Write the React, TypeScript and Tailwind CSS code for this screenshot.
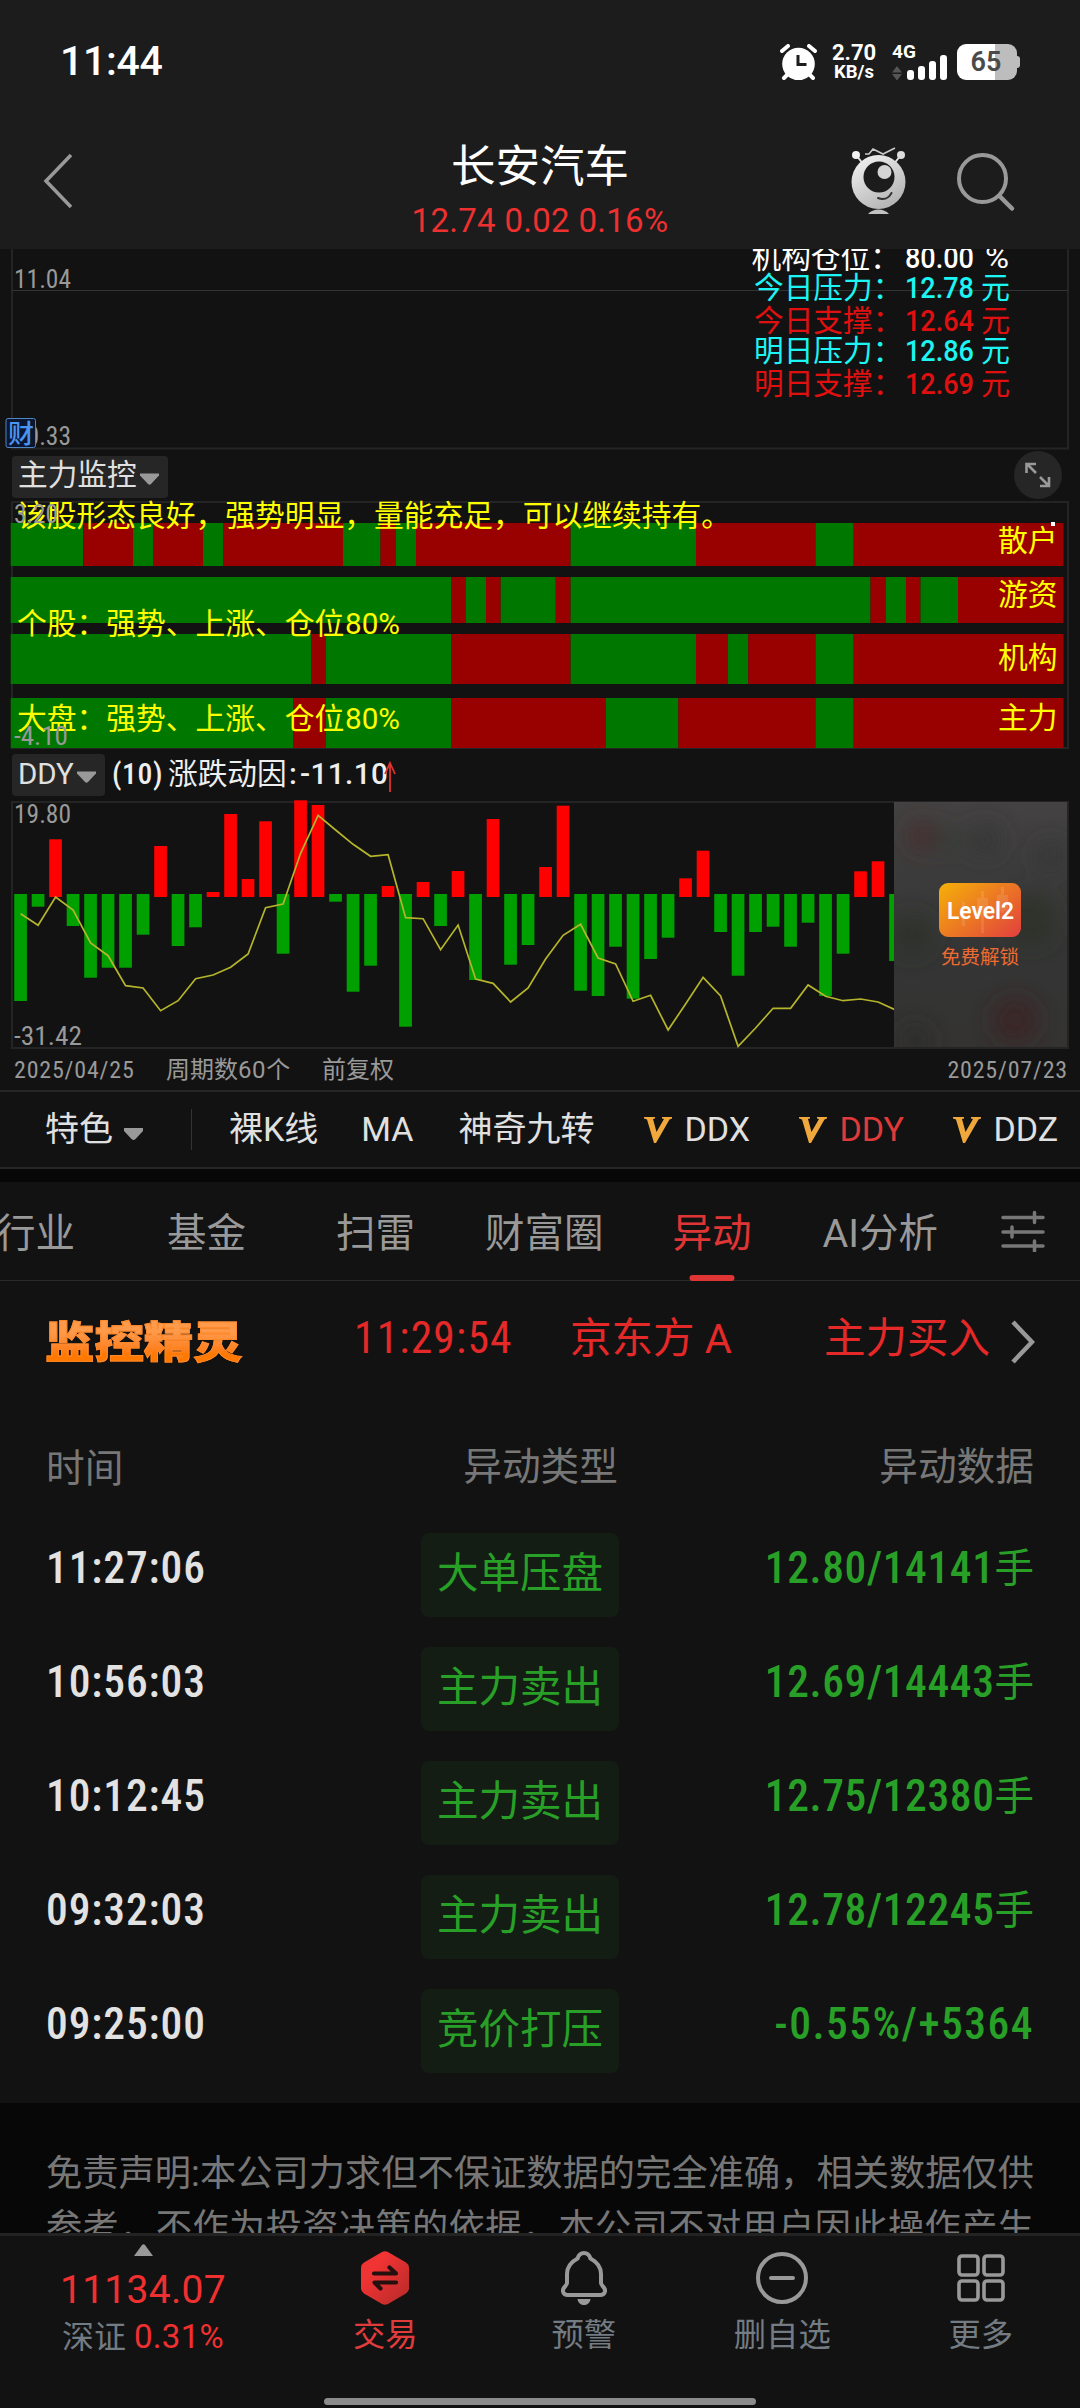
import React, { useState } from "react"

const GREEN = "#007800"
const RED = "#990000"

// each strip: [end x, color], the first one starts at STRIP_START
const STRIP_START = 10.7
const strips = [
	{
		label: "散户",
		y: 523,
		h: 43,
		labelY: 550.5,
		parts: [
			[83.3, "g"], [133, "r"], [153, "g"], [203, "r"], [223.5, "g"], [343, "r"], [380.5, "g"],
			[395.7, "r"], [416, "g"], [570.6, "r"], [696, "g"], [815.5, "r"], [853.7, "g"], [1063.5, "r"],
		],
	},
	{
		label: "游资",
		y: 577,
		h: 46,
		labelY: 604.5,
		parts: [
			[451, "g"], [465.6, "r"], [486, "g"], [500.7, "r"], [555.8, "g"], [570.6, "r"], [870.5, "g"],
			[885.7, "r"], [906, "g"], [920.5, "r"], [958, "g"], [1063.5, "r"],
		],
	},
	{
		label: "机构",
		y: 634,
		h: 50,
		labelY: 667.5,
		parts: [
			[311, "g"], [326, "r"], [451, "g"], [570.6, "r"], [696, "g"], [728, "r"], [748.3, "g"],
			[815.5, "r"], [853.7, "g"], [1063.5, "r"],
		],
	},
	{
		label: "主力",
		y: 698,
		h: 50,
		labelY: 727.5,
		parts: [
			[293, "g"], [326, "r"], [451, "g"], [606, "r"], [678.4, "g"], [815.5, "r"], [853.7, "g"], [1063.5, "r"],
		],
	},
]

// end of every DDY bar, above 894 is red
const ddyBars = [
	1001, 906.7, 839.3, 926, 977.7, 967.7, 967.7, 934.7, 846, 946, 927.3, 892, 814, 879, 821.3, 953.7, 800.3,
	805, 901.7, 991.7, 965.7, 886, 1026.7, 882, 926, 871, 980, 819, 964.7, 945, 867, 805.7, 990.7, 996, 946.7,
	998.7, 959, 937.7, 878.3, 850.7, 932, 975.7, 932, 926.7, 946.7, 922.7, 996, 953.7, 871.3, 861.3, 961,
]

const ddyLine = [
	913.7, 925.3, 897, 910, 943, 955.7, 985.7, 988, 1010.7, 1000.7, 978.7, 975, 967.3, 954, 907.7, 904, 853.3,
	815.3, 830, 844.3, 856.3, 854.7, 917.7, 918.7, 949.7, 925, 979, 983.3, 1002, 988, 959, 935.3, 924.3, 958,
	964, 1001.3, 995.3, 1030, 1004, 977.3, 996, 1046.3, 1028, 1008.3, 1008.3, 985, 996.3, 1000.7, 999, 1002, 1010,
]

const levels = [
	{ name: "机构仓位：", value: "80.00", unit: "%", y: 267.5, x: 751.5, color: "#ffffff" },
	{ name: "今日压力：", value: "12.78", unit: "元", y: 298, x: 754, color: "#1df4f4" },
	{ name: "今日支撑：", value: "12.64", unit: "元", y: 331, x: 754, color: "#e01010" },
	{ name: "明日压力：", value: "12.86", unit: "元", y: 361, x: 754, color: "#1df4f4" },
	{ name: "明日支撑：", value: "12.69", unit: "元", y: 394, x: 754, color: "#e01010" },
]

const tabs = [
	{ name: "行业", cls: "w-[75px] justify-end" },
	{ name: "基金", cls: "ml-[92px]" },
	{ name: "扫雷", cls: "ml-[90px]" },
	{ name: "财富圈", cls: "ml-[70px]" },
	{ name: "异动", cls: "ml-[69px]" },
	{ name: "AI分析", cls: "ml-[71px]" },
]

const records = [
	{ time: "11:27:06", type: "大单压盘", data: "12.80/14141", unit: "手" },
	{ time: "10:56:03", type: "主力卖出", data: "12.69/14443", unit: "手" },
	{ time: "10:12:45", type: "主力卖出", data: "12.75/12380", unit: "手" },
	{ time: "09:32:03", type: "主力卖出", data: "12.78/12245", unit: "手" },
	{ time: "09:25:00", type: "竞价打压", data: "-0.55%/+5364", unit: "" },
]

function StatusBar() {
	return (
		<div className="flex h-[120px] items-start justify-between pl-[60px] pr-[60px] text-white">
			<div className="mt-[36px] text-[41px] leading-[50px] font-medium tracking-[-0.3px]">11:44</div>
			<div className="mt-[44px] flex h-9">
				<svg width="37" height="36" viewBox="0 0 37 36" fill="none">
					<circle cx="18.5" cy="20" r="16.3" fill="#fff" />
					<path d="M2 7l6-5M35 7l-6-5M4 34l5-5M33 34l-5-5" stroke="#fff" strokeWidth="4" strokeLinecap="round" />
					<path d="M18 11v9.5h8.5" stroke="#1c1c1c" strokeWidth="3" />
				</svg>
				<div className="ml-[12px] flex w-[50px] flex-col items-center font-bold">
					<span className="text-[22px] leading-[18px]">2.70</span>
					<span className="text-[18.5px] leading-[21px]">KB/s</span>
				</div>
				<svg className="ml-[13px]" width="58" height="36" viewBox="0 0 58 36">
					<text x="0" y="14" fontSize="19" fontWeight="700" fill="#fff" textLength="24">
						4G
					</text>
					<path d="M5 22l5 6.500h-10zM5 36.500l5-6.500h-10z" fill="#555" />
					<rect x="15" y="26" width="7" height="10" rx="3" fill="#fff" />
					<rect x="26" y="22" width="7" height="14" rx="3" fill="#fff" />
					<rect x="37" y="17" width="7" height="19" rx="3" fill="#fff" />
					<rect x="48" y="11" width="7" height="25" rx="3" fill="#fff" />
				</svg>
				<div className="ml-[7px] flex items-center">
					<div className="flex h-9 w-[60px] items-center justify-center rounded-[9px] bg-linear-to-r from-white from-[64%] to-[#bdbdbd] to-[64%] text-[27px] leading-none font-semibold text-[#4a4a4a]">
						<span className="-ml-0.5">65</span>
					</div>
					<div className="h-3 w-[3px] rounded-r-sm bg-[#bdbdbd]"></div>
				</div>
			</div>
		</div>
	)
}

function Robot() {
	return (
		<svg width="56" height="70" viewBox="0 0 56 70" fill="none">
			<defs>
				<linearGradient id="robot" x1="0" y1="0" x2="0.6" y2="1">
					<stop stopColor="#f6f6f6" />
					<stop offset="1" stopColor="#b5b5b5" />
				</linearGradient>
			</defs>
			<path d="M5 8l8 10M50 8l-8 10" stroke="#e3e3e3" strokeWidth="2" />
			<circle cx="5" cy="8" r="4" fill="#f1f1f1" />
			<circle cx="50" cy="8" r="4" fill="#dcdcdc" />
			<path d="M14 7h4l4-5 10 5 12-6" stroke="#c9c9c9" strokeWidth="1.600" />
			<circle cx="27.500" cy="35" r="27" fill="url(#robot)" />
			<circle cx="28" cy="30" r="15.500" fill="#1c1c1c" />
			<circle cx="33.500" cy="25" r="7" fill="#d4d4d4" />
			<path d="M27 51c6 2.500 11 0 13.500-5" stroke="#333" strokeWidth="2" strokeLinecap="round" />
			<path d="M17 67c5-6 16-6 21 0z" fill="#c2c2c2" />
		</svg>
	)
}

function Header() {
	return (
		<div className="flex h-[129px] items-start">
			<div className="w-[330px] pl-[43px] pt-[33px]">
				<svg width="30" height="56" viewBox="0 0 30 56" fill="none">
					<path d="M28 2L3 28l25 26" stroke="#999" strokeWidth="3.500" />
				</svg>
			</div>
			<div className="flex w-[420px] flex-col items-center pt-[18px]">
				<div className="text-[44.5px] leading-[58px] text-white">长安汽车</div>
				<div className="mt-[5px] text-[33px] leading-[40px] tracking-[0.3px] text-[#ee3030]">12.74 0.02 0.16%</div>
			</div>
			<div className="flex pl-[101px]">
				<div className="pt-[27px]">
					<Robot />
				</div>
				<svg className="ml-[49px] mt-[32px]" width="60" height="60" viewBox="0 0 60 60" fill="none">
					<circle cx="26.500" cy="26.500" r="23.500" stroke="#999" strokeWidth="4" />
					<path d="M43.500 44L56 56.500" stroke="#999" strokeWidth="4.500" strokeLinecap="round" />
				</svg>
			</div>
		</div>
	)
}

function PriceChart() {
	return (
		<svg className="block" width="1080" height="205" viewBox="0 249 1080 205">
			<path d="M12 249v199.500h1056V249" fill="none" stroke="#242424" strokeWidth="2" />
			<path d="M12 290.500h1056" stroke="#333" strokeWidth="1" />
			<g fontSize="25" fill="#999" className="font-stretch-[85%]">
				<text x="14" y="288" textLength="57" lengthAdjust="spacingAndGlyphs">11.04</text>
				<text x="14" y="445" textLength="57" lengthAdjust="spacingAndGlyphs">10.33</text>
			</g>
			<rect x="6" y="418.500" width="29.500" height="29" rx="2" fill="#0b1730" stroke="#4f86c6" />
			<text x="8" y="443" fontSize="26" fontWeight="500" fill="#4a94f2">
				财
			</text>
			{levels.map(({ name, value, unit, y, x, color }) => (
				<g key={name} fill={color} fontSize="29.700">
					<text x={x} y={y}>{name}</text>
					<text x="905" y={y} fontSize="30" fontWeight="500" textLength="69" lengthAdjust="spacingAndGlyphs" className="font-stretch-[90%]">
						{value}
					</text>
					<text x={unit === "%" ? 985 : 981} y={y} textLength={unit === "%" ? 24 : 29} lengthAdjust="spacingAndGlyphs">
						{unit}
					</text>
				</g>
			))}
		</svg>
	)
}

function Arrow() {
	return (
		<svg width="19" height="12" viewBox="0 0 19 12">
			<path d="M0 .5h19v2L11 11q-1.500 1.500-3 0L0 2.500z" fill="#999" />
		</svg>
	)
}

function StripChart() {
	return (
		<svg className="block" width="1080" height="254" viewBox="0 500 1080 254">
			<rect x="12" y="502" width="1056" height="246" fill="none" stroke="#242424" strokeWidth="2" />
			{strips.map(({ label, y, h, parts }) =>
				parts.map(([end, c], i) => {
					const start = i === 0 ? STRIP_START : Number(parts[i - 1][0])
					return (
						<rect key={label + i} x={start} y={y} width={Number(end) - start} height={h} fill={c === "g" ? GREEN : RED} />
					)
				})
			)}
			<g fill="#ffff00" fontSize="29.750">
				<text x="17" y="526">该股形态良好，强势明显，量能充足，可以继续持有。</text>
				<text x="17" y="634">个股：强势、上涨、仓位</text>
				<text x="17" y="729">大盘：强势、上涨、仓位</text>
				<g className="font-stretch-[90%]" fontSize="29.500">
					<text x="345" y="633.500" textLength="55" lengthAdjust="spacingAndGlyphs">80%</text>
					<text x="345" y="728.500" textLength="55" lengthAdjust="spacingAndGlyphs">80%</text>
				</g>
				{strips.map(({ label, labelY }) => (
					<text key={label} x="998" y={labelY}>{label}</text>
				))}
			</g>
			<g fontSize="25" fill="#999" className="font-stretch-[85%]">
				<text x="14" y="523" textLength="44" lengthAdjust="spacingAndGlyphs">3.20</text>
				<text x="14" y="745" textLength="54" lengthAdjust="spacingAndGlyphs">-4.10</text>
			</g>
			<rect x="1051" y="522" width="4" height="4" fill="#fff" />
		</svg>
	)
}

function DdyChart() {
	return (
		<svg className="block" width="1080" height="252" viewBox="0 798 1080 252">
			<defs>
				<linearGradient id="lock" x1="0" y1="0" x2="0" y2="1">
					<stop stopColor="#444242" />
					<stop offset="0.6" stopColor="#353535" />
					<stop offset="1" stopColor="#343332" />
				</linearGradient>
				<linearGradient id="badge" x1="0" y1="0.1" x2="1" y2="0.9">
					<stop stopColor="#f5ac0a" />
					<stop offset="1" stopColor="#e2443c" />
				</linearGradient>
				<filter id="soft" x="-100%" y="-100%" width="300%" height="300%">
					<feGaussianBlur stdDeviation="11" />
				</filter>
				<clipPath id="plot">
					<rect x="12" y="798" width="882" height="252" />
				</clipPath>
				<clipPath id="lockClip">
					<rect x="894" y="802" width="173" height="245" />
				</clipPath>
			</defs>
			<rect x="12" y="802" width="1056" height="246" fill="none" stroke="#242424" strokeWidth="2" />
			<g clipPath="url(#plot)">
				{ddyBars.map((end, i) => {
					const up = end < 894
					return (
						<rect
							key={i}
							x={14.2 + i * 17.5}
							y={up ? end : 894}
							width="12.700"
							height={up ? 897 - end : end - 894}
							fill={up ? "#ff0000" : "#00a000"}
						/>
					)
				})}
				<polyline
					points={ddyLine.map((v, i) => `${20.6 + i * 17.5},${v}`).join(" ")}
					fill="none"
					stroke="#b5b52c"
					strokeWidth="1.700"
				/>
			</g>
			<g fontSize="25" fill="#999" className="font-stretch-[85%]">
				<text x="14" y="823" textLength="57" lengthAdjust="spacingAndGlyphs">19.80</text>
				<text x="14" y="1045" textLength="68" lengthAdjust="spacingAndGlyphs">-31.42</text>
			</g>
			{/* Locked area */}
			<g clipPath="url(#lockClip)">
				<rect x="894" y="802" width="173" height="245" fill="url(#lock)" />
				<g filter="url(#soft)" opacity="0.8">
					<circle cx="922" cy="836" r="15" fill="#47292b" />
					<circle cx="948" cy="840" r="10" fill="#2a3a2a" />
					<circle cx="985" cy="840" r="16" fill="#363535" />
					<circle cx="1050" cy="856" r="14" fill="#343434" />
					<circle cx="912" cy="935" r="20" fill="#2a3326" />
					<circle cx="1030" cy="920" r="26" fill="#2a3326" />
					<circle cx="1015" cy="1020" r="22" fill="#3d2123" />
					<circle cx="915" cy="1040" r="14" fill="#2b2b2b" />
				</g>
			</g>
			<rect x="939" y="883" width="82" height="54" rx="9" fill="url(#badge)" />
			<path d="M959 902h6v24h-3v-24M977 898h11v18h-11zM981 891h3v42h-3zM997 895h11v16h-11zM1001 887h3v26h-3z" fill="#fff" fillOpacity="0.110" />
			<text x="947" y="919" fontSize="24" fontWeight="600" fill="#fff" textLength="67" lengthAdjust="spacingAndGlyphs" className="font-stretch-[90%]">
				Level2
			</text>
			<text x="941" y="964" fontSize="19.500" fill="#ee6a30">
				免费解锁
			</text>
		</svg>
	)
}

function Charts() {
	return (
		<div className="h-[841px]">
			<PriceChart />
			<div className="flex h-[46px] items-center justify-between pl-3 pr-[18px]">
				<div className="flex h-[42px] w-[156px] items-center justify-between rounded-sm bg-[#262626] pl-[6px] pr-[9px] text-[29.7px] text-[#e0e0e0]">
					<span className="-mt-[4px]">主力监控</span>
					<span className="mt-1 flex">
						<Arrow />
					</span>
				</div>
				<div className="-mb-1 -mt-2 flex h-12 w-12 items-center justify-center rounded-full bg-[#262626]">
					<svg width="26" height="26" viewBox="0 0 26 26" fill="none" stroke="#999" strokeWidth="2.600">
						<path d="M1.500 11V2h9.500M2 2l9 9M24 15v9h-9M24 24l-9-9" />
					</svg>
				</div>
			</div>
			<StripChart />
			<div className="flex h-[44px] items-start pl-3">
				<div className="flex h-[42px] w-[93px] items-center justify-between rounded-sm bg-[#262626] pl-[6px] pr-[9px] text-[29.5px] text-[#e0e0e0]">
					<span className="-mt-0.5 font-stretch-[97%]">DDY</span>
					<span className="mt-1 flex">
						<Arrow />
					</span>
				</div>
				<div className="flex h-[42px] items-center pl-[7px] text-[29.7px] text-[#eee]">
					<div className="w-[56px] -mt-0.5 tracking-[0.6px] font-medium font-stretch-[85%]">(10)</div>
					<div className="w-[119px] -mt-0.5 whitespace-nowrap">涨跌动因</div>
					<div className="w-[13px] -mt-0.5 pl-[2px] font-medium">:</div>
					<div className="w-[84px] -mt-0.5 tracking-[0.4px] font-medium font-stretch-[88%]">-11.10</div>
					<svg className="mt-1" width="12" height="32" viewBox="0 0 12 32" fill="none" stroke="#e03030" strokeWidth="1.800">
						<path d="M6 31V3M1 13L6 2l5 11" />
					</svg>
				</div>
			</div>
			<DdyChart />
			<div className="flex h-10 items-center pl-[14px] pr-[12px] text-[24px] text-[#999]">
				<span className="w-[152px] tracking-[0.8px] font-stretch-[85%]">2025/04/25</span>
				<span className="w-[156px] whitespace-nowrap">
					周期数<span className="tracking-[0.6px] font-stretch-[88%]">60</span>个
				</span>
				<span>前复权</span>
				<span className="ml-auto tracking-[0.8px] font-stretch-[85%]">2025/07/23</span>
			</div>
		</div>
	)
}

function Vip({ name, active, cls }: { name: string; active?: boolean; cls: string }) {
	return (
		<div className={`flex items-center ${cls}`}>
			<svg width="28" height="26" viewBox="0 0 28 26">
				<path d="M0 0h11v1.500l-2 .5 3.500 13L20 2l-2-.5V0h10v1.500l-2.500 1L12 26H10L3 2.500 0 1.500z" fill="#f0a83c" />
			</svg>
			<span className={active ? "ml-[13px] text-[#e03a3a]" : "ml-[13px]"}>{name}</span>
		</div>
	)
}

function Toolbar() {
	return (
		<div className="flex h-[79px] items-center whitespace-nowrap border-y-2 border-[#262626] pl-[45px] text-[34px] text-[#e0e0e0]">
			<span>特色</span>
			<svg className="ml-[10px] mt-2" width="21" height="14" viewBox="0 0 21 14">
				<path d="M1 1h19v3l-7.500 8q-2 2-4 0L1 4z" fill="#999" />
			</svg>
			<div className="ml-[47px] h-[41px] w-px bg-[#333]"></div>
			<span className="ml-[37px]">裸K线</span>
			<span className="ml-[43px] font-stretch-[93%]">MA</span>
			<span className="ml-[45px]">神奇九转</span>
			<Vip name="DDX" cls="ml-[49px] w-[155px] font-stretch-[92%]" />
			<Vip name="DDY" cls="w-[154px] font-stretch-[92%]" active />
			<Vip name="DDZ" cls="font-stretch-[92%]" />
		</div>
	)
}

function Tabs() {
	const [active, setActive] = useState("异动")

	return (
		<div className="flex h-[99px] items-stretch border-b border-[#2a2a2a] text-[39.5px] leading-[56px]">
			{tabs.map(({ name, cls }) => (
				<button
					key={name}
					onClick={() => setActive(name)}
					className={`relative flex items-center whitespace-nowrap pt-[5px] ${cls} ${
						active === name ? "text-[#e03535]" : "text-[#999]"
					}`}
				>
					<span>{name}</span>
					{active === name && (
						<span className="absolute -bottom-px left-1/2 h-1.5 w-[45px] -translate-x-1/2 rounded-full bg-[#e03535]"></span>
					)}
				</button>
			))}
			<svg className="my-auto ml-[63px]" width="44" height="42" viewBox="0 0 44 42" fill="none" stroke="#777" strokeWidth="3.500" strokeLinecap="round">
				<path d="M2 7.500h40M2 22h40M2 36h40" />
				<path d="M33.500 2.500v10M11 17v10M33.500 31v10" />
			</svg>
		</div>
	)
}

function Monitor() {
	return (
		<div className="flex h-[120px] items-center whitespace-nowrap text-[41.5px] text-[#e52828]">
			<div className="ml-[45px] mt-[6px] w-[303px]">
				<span className="inline-block scale-y-[0.88] bg-linear-to-b from-[#ff9a4a] from-30% to-[#ff7800] to-70% bg-clip-text text-[49.4px] leading-[64px] font-black text-transparent [-webkit-text-stroke:1px_#ff8a2c]">
					监控精灵
				</span>
			</div>
			<span className="-mt-[5px] ml-[6px] w-[216px] text-[43.5px] tracking-[1.2px] font-stretch-[85%]">11:29:54</span>
			<span className="-mt-[4px]">京东方 A</span>
			<span className="-mt-[4px] ml-auto">主力买入</span>
			<svg className="ml-5 mr-[45px] mt-px" width="25" height="44" viewBox="0 0 25 44" fill="none">
				<path d="M3 2l19 20L3 42" stroke="#999" strokeWidth="4.500" />
			</svg>
		</div>
	)
}

function RecordTable() {
	return (
		<div className="h-[702px] px-[46px]">
			<div className="flex h-[132px] items-center text-[38.7px] text-[#777]">
				<div className="w-[373px] pt-[5px]">时间</div>
				<div className="w-[199px] text-right">异动类型</div>
				<div className="flex-1 text-right">异动数据</div>
			</div>
			{records.map(({ time, type, data, unit }) => (
				<div key={time} className="flex h-[114px] items-start">
					<div className="w-[375px] pt-[10px] text-[43.5px] leading-[52px] font-medium tracking-[0.9px] text-[#e2e2e2] font-stretch-[85%]">
						{time}
					</div>
					<div className="flex h-[84px] w-[198px] items-start justify-center rounded-lg bg-[#131d13] pt-[11px] text-[41.5px] leading-[60px] text-[#28a028]">
						{type}
					</div>
					<div className="flex flex-1 justify-end pt-[10px] leading-[52px] text-[#28a028]">
						<span
							className={`text-[43.5px] font-medium font-stretch-[85%] ${unit ? "tracking-[0.6px]" : "tracking-[1.5px]"}`}
						>
							{data}
						</span>
						{unit && <span className="text-[39.5px]">{unit}</span>}
					</div>
				</div>
			))}
		</div>
	)
}

function NavItem({ label, active, children }: { label: string; active?: boolean; children: React.ReactNode }) {
	return (
		<div className="flex flex-1 flex-col items-center pt-[13px]">
			<div className="flex h-[58px] items-center">{children}</div>
			<span className={`mt-[8px] text-[32.3px] leading-[40px] ${active ? "text-[#e03c3c]" : "text-[#737b83]"}`}>{label}</span>
		</div>
	)
}

function BottomNav() {
	return (
		<div className="h-[175px] border-t-[3px] border-[#232323] bg-[#121212]">
			<div className="flex h-[162px]">
				<div className="flex w-[286px] flex-col items-center text-[#f03030]">
					<svg className="mt-[8px]" width="19" height="12" viewBox="0 0 19 12">
						<path d="M0 12h19L11 1q-1.500-1.500-3 0z" fill="#999" />
					</svg>
					<span className="mt-[10px] text-[39px] leading-[48px] tracking-[0.3px] font-stretch-[90%]">11134.07</span>
					<span className="mt-[3px] flex items-center text-[33px] leading-[40px]">
						<span className="mr-[8px] text-[32px] text-[#737b83]">深证</span>
						<span className="tracking-[0.3px]">0.31%</span>
					</span>
				</div>
				<NavItem label="交易" active>
					<svg width="48" height="54" viewBox="0 0 48 54">
						<defs>
							<linearGradient id="trade" x1="0" y1="0" x2="1" y2="1">
								<stop offset="0.3" stopColor="#f03333" />
								<stop offset="1" stopColor="#b52a2a" />
							</linearGradient>
						</defs>
						<path d="M21 1q3-1.500 6 0l18 10.500q3 2 3 5v21q0 3-3 5L27 53q-3 1.500-6 0L3 42.500q-3-2-3-5v-21q0-3 3-5z" fill="url(#trade)" />
						<path d="M13 22.500h22l-6.500-6M35 31.500H13.500l6 6" fill="none" stroke="#24100f" strokeWidth="4.200" strokeLinecap="round" strokeLinejoin="round" />
					</svg>
				</NavItem>
				<NavItem label="预警">
					<svg width="46" height="56" viewBox="0 0 46 56" fill="none">
						<path
							d="M23 3c-4 0-5.500 2.500-6.500 5.500C10 12 6 17 6 24v9c0 1.500-1 2.500-2 3.500-4 4-1.500 8.500 2.500 8.500h33c4 0 6.500-4.500 2.500-8.500-1-1-2-2-2-3.500v-9c0-7-4-12-10.500-15.500C28.500 5.500 27 3 23 3z"
							stroke="#999"
							strokeWidth="4"
						/>
						<path d="M16.500 49h13c-1 8-12 8-13 0z" fill="#999" />
					</svg>
				</NavItem>
				<NavItem label="删自选">
					<svg width="52" height="52" viewBox="0 0 52 52" fill="none" stroke="#999" strokeWidth="4">
						<circle cx="26" cy="26" r="24" />
						<path d="M15 26h22" strokeLinecap="round" />
					</svg>
				</NavItem>
				<NavItem label="更多">
					<svg width="48" height="48" viewBox="0 0 48 48" fill="none" stroke="#999" strokeWidth="3.600">
						<rect x="2" y="2" width="19" height="19" rx="3" />
						<rect x="27" y="2" width="19" height="19" rx="3" />
						<rect x="2" y="27" width="19" height="19" rx="3" />
						<rect x="27" y="27" width="19" height="19" rx="3" />
					</svg>
				</NavItem>
			</div>
			<div className="mx-auto h-[7px] w-[432px] rounded-full bg-[#8c8c8c]"></div>
		</div>
	)
}

function App() {
	return (
		<div className="flex h-[2408px] w-[1080px] flex-col overflow-hidden bg-[#121212] font-['Roboto','Noto_Sans_CJK_SC',sans-serif]">
			<div className="h-[249px] shrink-0 bg-[#1c1c1c]">
				<StatusBar />
				<Header />
			</div>
			<Charts />
			<Toolbar />
			<div className="h-[13px] shrink-0 bg-[#070707]"></div>
			<Tabs />
			<Monitor />
			<RecordTable />
			<div className="h-[130px] shrink-0 overflow-hidden bg-[#070707] px-[46px] pt-[44px]">
				<p className="text-justify text-[36.2px] leading-[54px] text-[#777]">
					免责声明:本公司力求但不保证数据的完全准确，相关数据仅供参考，不作为投资决策的依据，本公司不对用户因此操作产生的盈亏承担责任。
				</p>
			</div>
			<BottomNav />
		</div>
	)
}

export default App
